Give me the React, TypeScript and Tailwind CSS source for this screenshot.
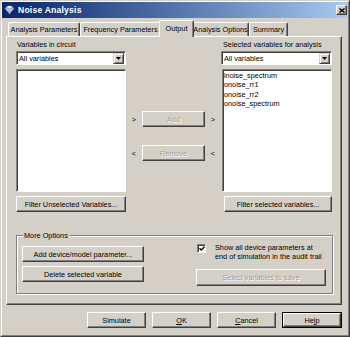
import type { ReactNode } from 'react'

function Button({
  children,
  className = '',
  disabled = false,
}: {
  children: ReactNode
  className?: string
  disabled?: boolean
}) {
  return (
    <div
      className={`flex items-center justify-center bg-[#d4d0c8] border border-t-white border-l-white border-r-[#404040] border-b-[#404040] shadow-[inset_-1px_-1px_0_#808080] whitespace-nowrap ${
        disabled ? 'text-[#a09c94] [text-shadow:1px_1px_0_#fff]' : 'text-black'
      } ${className}`}
    >
      {children}
    </div>
  )
}

function Dropdown() {
  return (
    <div className="flex h-[14px] w-full bg-white border border-t-[#808080] border-l-[#808080] border-r-white border-b-white shadow-[inset_1px_1px_0_#404040] pl-[2px] pt-px pr-px pb-0">
      <div className="flex-1 flex items-center">All variables</div>
      <div className="w-[11px] h-[11px] flex items-center justify-center bg-[#d4d0c8] border border-t-[#d4d0c8] border-l-[#d4d0c8] border-r-[#404040] border-b-[#404040] shadow-[inset_1px_1px_0_#fff,inset_-1px_-1px_0_#808080]">
        <svg width="5" height="3" viewBox="0 0 5 3">
          <path d="M0 0h5L2.5 3z" fill="#000" />
        </svg>
      </div>
    </div>
  )
}

function Sunken({ children, className = '' }: { children?: ReactNode; className?: string }) {
  return (
    <div
      className={`bg-white border border-t-[#808080] border-l-[#808080] border-r-white border-b-white shadow-[inset_1px_1px_0_#404040] ${className}`}
    >
      {children}
    </div>
  )
}

const tabs = [
  { label: 'Analysis Parameters', w: 'w-[72px]' },
  { label: 'Frequency Parameters', w: 'w-[81px]' },
  { label: 'Output', w: 'w-[35px]', active: true },
  { label: 'Analysis Options', w: 'w-[57px]' },
  { label: 'Summary', w: 'w-[39px]' },
]

export default function App() {
  return (
    <div className="w-[350px] h-[337px] bg-[#d4d0c8] border border-t-[#d4d0c8] border-l-[#d4d0c8] border-r-[#404040] border-b-[#404040] [font-family:'Liberation_Sans',Arial,sans-serif] text-[7.3px] leading-[9px] text-black overflow-hidden">
      <div className="h-full flex flex-col border border-t-white border-l-white border-r-[#808080] border-b-[#808080]">
        {/* Title bar */}
        <div className="h-[16px] flex items-center bg-gradient-to-r from-[#0a246a] to-[#a6caf0] pl-[1px] pr-[1px]">
          <svg width="11" height="10" viewBox="0 0 11 10" className="ml-[1px]">
            <path d="M1 3.5L3.5 1h4L10 3.5 5.5 9z" fill="#c8d4e8" stroke="#6a7aa0" strokeWidth="0.6" />
            <path d="M1 3.5h9M3.5 1l2 8M7.5 1l-2 8" stroke="#7a88b0" strokeWidth="0.5" fill="none" />
            <path d="M3.5 1h4l-2 2.5z" fill="#fff" />
          </svg>
          <span className="ml-[3px] text-white font-bold text-[8.6px] tracking-[0.2px]">Noise Analysis</span>
          <div className="ml-auto w-[11px] h-[10px] flex items-center justify-center bg-[#d4d0c8] border border-t-white border-l-white border-r-[#404040] border-b-[#404040] shadow-[inset_-1px_-1px_0_#808080]">
            <svg width="6" height="5" viewBox="0 0 6 5">
              <path d="M0.5 0.5l5 4M5.5 0.5l-5 4" stroke="#000" strokeWidth="1.4" />
            </svg>
          </div>
        </div>

        {/* Tabs */}
        <div className="h-[18px] flex items-end pl-[6px]">
          {tabs.map((t) =>
            t.active ? (
              <div
                key={t.label}
                className={`${t.w} h-[17px] -mx-[2px] -mb-px relative z-10 flex items-center justify-center bg-[#d4d0c8] border border-b-0 border-t-white border-l-white border-r-[#404040] rounded-t-[2px] shadow-[inset_-1px_0_0_#808080] pb-[2px]`}
              >
                {t.label}
              </div>
            ) : (
              <div
                key={t.label}
                className={`${t.w} h-[14px] flex items-center justify-center border border-b-0 border-t-white border-l-white border-r-[#404040] rounded-t-[2px] shadow-[inset_-1px_0_0_#808080]`}
              >
                {t.label}
              </div>
            )
          )}
        </div>

        {/* Tab panel */}
        <div className="ml-[4px] w-[336px] h-[269px] flex flex-col border border-t-white border-l-white border-r-[#404040] border-b-[#404040] shadow-[inset_-1px_-1px_0_#808080] pl-[9px] pt-[3px]">
          <div className="flex">
            {/* Left column */}
            <div className="w-[110px] flex flex-col">
              <div className="pl-px h-[9px]">Variables in circuit</div>
              <div className="mt-[2px]">
                <Dropdown />
              </div>
              <Sunken className="mt-[4px] h-[123px]" />
              <Button className="mt-[4px] h-[16px]">Filter Unselected Variables...</Button>
            </div>

            {/* Middle column */}
            <div className="w-[95px] flex flex-col pt-[71px]">
              <div className="flex items-center h-[16px]">
                <span className="w-[16px] text-center">&gt;</span>
                <Button disabled className="w-[63px] h-[16px]">
                  Add
                </Button>
                <span className="w-[16px] text-center">&gt;</span>
              </div>
              <div className="flex items-center h-[16px] mt-[18px]">
                <span className="w-[16px] text-center">&lt;</span>
                <Button disabled className="w-[63px] h-[16px]">
                  Remove
                </Button>
                <span className="w-[16px] text-center">&lt;</span>
              </div>
            </div>

            {/* Right column */}
            <div className="w-[111px] flex flex-col">
              <div className="pl-[2px] h-[9px]">Selected variables for analysis</div>
              <div className="mt-[2px]">
                <Dropdown />
              </div>
              <Sunken className="mt-[4px] h-[123px] ml-px pl-px pt-px leading-[9.3px]">
                <div>inoise_spectrum</div>
                <div>onoise_rr1</div>
                <div>onoise_rr2</div>
                <div>onoise_spectrum</div>
              </Sunken>
              <Button className="mt-[4px] ml-[3px] h-[16px]">Filter selected variables...</Button>
            </div>
          </div>

          {/* More Options group */}
          <div className="mt-[23px] w-[317px] h-[59px] flex flex-col border border-[#808080] shadow-[inset_1px_1px_0_#fff,1px_1px_0_#fff]">
            <div className="-mt-[5px] ml-[6px] self-start px-px bg-[#d4d0c8] h-[9px]">More Options</div>
            <div className="flex">
              <div className="w-[127px] pl-[5px] flex flex-col">
                <Button className="mt-[6px] h-[16px]">Add device/model parameter...</Button>
                <Button className="mt-[4px] h-[16px]">Delete selected variable</Button>
              </div>
              <div className="ml-[53px] flex flex-col">
                <div className="flex mt-[4px]">
                  <Sunken className="w-[9px] h-[9px] flex items-center justify-center">
                    <svg width="6" height="5" viewBox="0 0 6 5">
                      <path d="M0.5 2.2l1.7 1.8L5.5 0.7" stroke="#000" strokeWidth="1.3" fill="none" />
                    </svg>
                  </Sunken>
                  <div className="ml-[9px] -mt-[1px]">
                    Show all device parameters at
                    <br />
                    end of simulation in the audit trail
                  </div>
                </div>
                <Button disabled className="mt-[8px] w-[130px] h-[17px] -ml-px">
                  Select variables to save
                </Button>
              </div>
            </div>
          </div>
        </div>

        {/* Bottom buttons */}
        <div className="mt-[7px] flex justify-end gap-[6px] pr-[6px]">
          <Button className="w-[59px] h-[16px]">Simulate</Button>
          <Button className="w-[59px] h-[16px]">
            <span className="underline">O</span>K
          </Button>
          <Button className="w-[59px] h-[16px]">
            <span className="underline">C</span>ancel
          </Button>
          <div className="w-[60px] h-[16px] border border-black flex">
            <Button className="flex-1">
              He<span className="underline">l</span>p
            </Button>
          </div>
        </div>
      </div>
    </div>
  )
}
